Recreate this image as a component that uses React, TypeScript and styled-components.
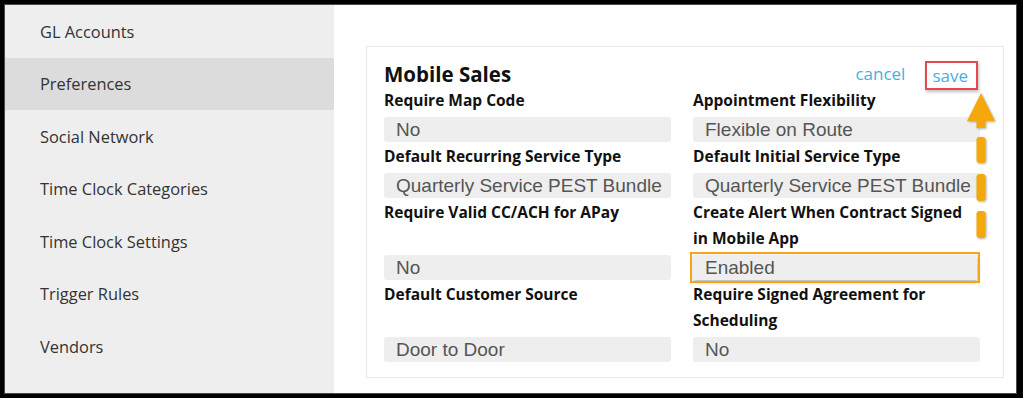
import styled, { createGlobalStyle } from 'styled-components';

const GlobalStyle = createGlobalStyle`
  html, body {
    margin: 0;
    padding: 0;
    background: #000;
  }
  * { box-sizing: border-box; }
`;

const Frame = styled.div`
  margin: 4px 6px 4px 4px;
  border: 1px solid #4a4a4a;
  height: 390px;
  display: flex;
  background: #fff;
  overflow: hidden;
  font-family: 'Open Sans', 'Noto Sans', sans-serif;
`;

const Sidebar = styled.nav`
  width: 329px;
  flex-shrink: 0;
  background: #eeeeee;
  display: flex;
  flex-direction: column;
`;

const NavItem = styled.div<{ active?: boolean }>`
  height: 52.5px;
  display: flex;
  align-items: center;
  padding-left: 35px;
  font-size: 16.4px;
  color: #333;
  background: ${(p) => (p.active ? '#dcdcdc' : 'transparent')};
`;

const Main = styled.main`
  flex: 1;
  padding: 41px 0 0 32px;
  position: relative;
`;

const Card = styled.section`
  width: 638px;
  border: 1px solid #e8e8e8;
  padding: 14px 23px 15px 17px;
  position: relative;
`;

const Header = styled.div`
  height: 25px;
  display: flex;
  align-items: center;
  justify-content: space-between;
`;

const Title = styled.h2`
  margin: 0;
  font-size: 20.5px;
  font-weight: 700;
  color: #111;
`;

const Actions = styled.div`
  display: flex;
  align-items: center;
  gap: 20px;
  margin-right: 2px;
`;

const LinkText = styled.a`
  font-size: 17px;
  color: #45b1e1;
  text-decoration: none;
  cursor: pointer;
`;

const Callout = styled.span`
  display: inline-flex;
  align-items: center;
  height: 29px;
  padding: 0 8px 0 5px;
  border: 2px solid #e8474f;
  box-shadow: 1px 2px 3px rgba(0, 0, 0, 0.25);
  margin-top: 3px;
`;

const Row = styled.div`
  display: grid;
  grid-template-columns: 287px 287px;
  column-gap: 22px;
`;

const Cell = styled.div`
  display: flex;
  flex-direction: column;
`;

const Label = styled.div`
  flex: 1;
  margin: 1px 0 4px;
  font-size: 15.5px;
  font-weight: 700;
  line-height: 26px;
  color: #111;
  white-space: nowrap;
`;

const Field = styled.div<{ highlight?: boolean }>`
  height: 25px;
  display: flex;
  align-items: center;
  padding-left: 12px;
  background: #eeeeee;
  border-radius: 3px;
  font-family: 'Liberation Sans', Arial, sans-serif;
  font-size: 19px;
  color: #555;
  ${(p) =>
    p.highlight &&
    `
    margin-right: 3px;
    outline: 2px solid #f4a51c;
    outline-offset: 1px;
    border-radius: 0;
    box-shadow: 1px 2px 4px rgba(0,0,0,0.3);
  `}
`;

const ArrowMark = styled.svg`
  position: absolute;
  left: 599px;
  top: 46px;
  overflow: visible;
  filter: drop-shadow(1px 1px 1px rgba(0, 0, 0, 0.3));
`;

const rows = [
  [
    { label: 'Require Map Code', value: 'No' },
    { label: 'Appointment Flexibility', value: 'Flexible on Route' },
  ],
  [
    { label: 'Default Recurring Service Type', value: 'Quarterly Service PEST Bundle' },
    { label: 'Default Initial Service Type', value: 'Quarterly Service PEST Bundle' },
  ],
  [
    { label: 'Require Valid CC/ACH for APay', value: 'No' },
    { label: ['Create Alert When Contract Signed', 'in Mobile App'], value: 'Enabled', highlight: true },
  ],
  [
    { label: 'Default Customer Source', value: 'Door to Door' },
    { label: ['Require Signed Agreement for', 'Scheduling'], value: 'No' },
  ],
];

const navItems = [
  'GL Accounts',
  'Preferences',
  'Social Network',
  'Time Clock Categories',
  'Time Clock Settings',
  'Trigger Rules',
  'Vendors',
];

export default function App() {
  return (
    <>
      <GlobalStyle />
      <Frame>
        <Sidebar>
          {navItems.map((n) => (
            <NavItem key={n} active={n === 'Preferences'}>
              {n}
            </NavItem>
          ))}
        </Sidebar>
        <Main>
          <Card>
            <Header>
              <Title>Mobile Sales</Title>
              <Actions>
                <LinkText>cancel</LinkText>
                <Callout>
                  <LinkText>save</LinkText>
                </Callout>
              </Actions>
            </Header>
            {rows.map((row, i) => (
              <Row key={i}>
                {row.map((f, j) => (
                  <Cell key={j}>
                    <Label>
                      {Array.isArray(f.label)
                        ? f.label.map((l, k) => (
                            <span key={k}>
                              {l}
                              {k === 0 && <br />}
                            </span>
                          ))
                        : f.label}
                    </Label>
                    <Field highlight={(f as { highlight?: boolean }).highlight}>{f.value}</Field>
                  </Cell>
                ))}
              </Row>
            ))}
            <ArrowMark width="30" height="150" viewBox="0 0 30 150">
              <polygon points="15,0 29,28 1,28" fill="#f5a80c" />
              <rect x="10.5" y="27" width="9" height="8" fill="#f5a80c" />
              <rect x="10.5" y="44" width="9" height="26" rx="3" fill="#f5a80c" />
              <rect x="10.5" y="81" width="9" height="27" rx="3" fill="#f5a80c" />
              <rect x="10.5" y="118" width="9" height="27" rx="3" fill="#f5a80c" />
            </ArrowMark>
          </Card>
        </Main>
      </Frame>
    </>
  );
}
